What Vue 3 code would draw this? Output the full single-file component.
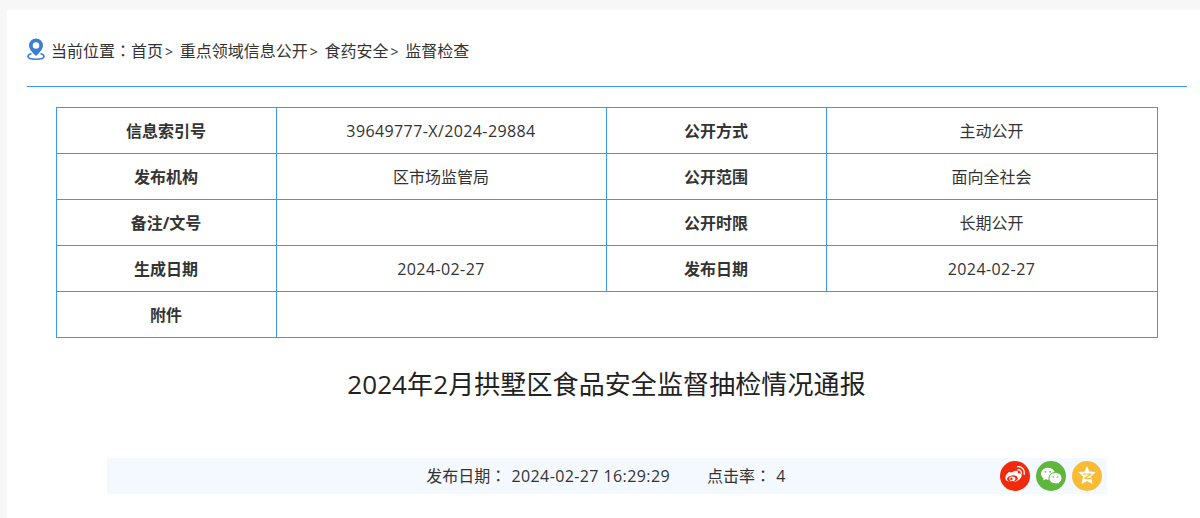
<script setup>
const rows = [
  ['信息索引号', '39649777-X/2024-29884', '公开方式', '主动公开'],
  ['发布机构', '区市场监管局', '公开范围', '面向全社会'],
  ['备注/文号', '', '公开时限', '长期公开'],
  ['生成日期', '2024-02-27', '发布日期', '2024-02-27'],
]
const crumbs = ['首页', '重点领域信息公开', '食药安全']
const isNum = (s) => /^[\dX/-]+$/.test(s)
</script>

<template>
  <div class="page">
    <main class="panel">
      <nav class="crumb">
        <svg class="pin" viewBox="0 0 18 22" width="18" height="22">
          <path fill="#3b7dd8" fill-rule="evenodd" d="M9 0.5a7 7 0 0 1 7 7c0 3.6-3.6 7.6-7 10.5C5.600 15.100 2 11.100 2 7.500a7 7 0 0 1 7-7zM9 4.200a3.300 3.300 0 1 0 0 6.600a3.300 3.300 0 0 0 0-6.600z"/>
          <path fill="none" stroke="#3b7dd8" stroke-width="1.600" d="M4.500 15.600C2.300 16.300 1 17.300 1 18.500c0 1.600 3.500 2.700 8 2.700s8-1.100 8-2.700c0-1.200-1.300-2.200-3.500-2.900"/>
        </svg>
        <span class="crumb-text">当前位置<span class="colon">：</span><template v-for="c in crumbs" :key="c"><a>{{ c }}</a><span class="sep">&gt;</span></template><a>监督检查</a></span>
      </nav>

      <table class="meta">
        <colgroup>
          <col class="c1" /><col class="c2" /><col class="c3" /><col class="c4" />
        </colgroup>
        <tbody>
          <tr v-for="r in rows" :key="r[0]">
            <th>{{ r[0] }}</th>
            <td :class="{ num: isNum(r[1]) }">{{ r[1] }}</td>
            <th>{{ r[2] }}</th>
            <td :class="{ num: isNum(r[3]) }">{{ r[3] }}</td>
          </tr>
          <tr>
            <th>附件</th>
            <td colspan="3"></td>
          </tr>
        </tbody>
      </table>

      <h1 class="title">2024年2月拱墅区食品安全监督抽检情况通报</h1>

      <div class="info">
        <span>发布日期<span class="colon">：</span> <span class="spaced">2024-02-27 16:29:29</span></span>
        <span class="hits">点击率<span class="colon">：</span> <span class="spaced">4</span></span>
        <div class="share">
          <svg viewBox="0 0 30 30" width="30" height="30">
            <circle cx="15" cy="15" r="15" fill="#f02a0c"/>
            <path fill="#fff" fill-rule="evenodd" d="M12.500 11.200c2.300-1.500 4.700-1.800 5.300-.7.300.6.100 1.300-.2 2 1.800-.4 4 .1 4 2.100 0 3.300-4.700 6.500-9.300 6.500-3.700 0-7-1.500-7-4.400 0-1.700 1.300-3.700 3.200-5.500zM12 14.400c-3 .3-5.200 2-5 3.900.2 1.800 2.800 3 5.800 2.700 3-.3 5.200-2 5-3.900-.2-1.900-2.800-3-5.800-2.700z"/>
            <ellipse cx="12.300" cy="17.700" rx="3.100" ry="2.300" fill="#fff"/>
            <circle cx="11.400" cy="18" r="1.200" fill="#f02a0c"/>
            <path fill="none" stroke="#fff" stroke-width="1.300" stroke-linecap="round" d="M17.800 8.800c2.300-.3 4.200 1.800 3.500 4M17.500 5.700c4.300-.6 7.800 3.300 6.700 7.700"/>
          </svg>
          <svg viewBox="0 0 30 30" width="30" height="30">
            <circle cx="15" cy="15" r="15" fill="#5fb63c"/>
            <path fill="#fff" d="M12 6.800c-3.900 0-7 2.700-7 6 0 1.900 1 3.500 2.600 4.600l-.6 2 2.300-1.200c.9.300 1.800.5 2.700.5 3.900 0 7-2.700 7-5.900s-3.100-6-7-6z"/>
            <path fill="#fff" stroke="#5fb63c" stroke-width="1" d="M26 17.200c0-3.100-2.800-5.700-6.500-5.700S13 14.100 13 17.200s2.800 5.600 6.500 5.600c.8 0 1.500-.1 2.200-.4l2 1.100-.5-1.800c1.700-1 2.800-2.600 2.800-4.500z"/>
            <circle cx="9.500" cy="10.800" r=".9" fill="#5fb63c"/>
            <circle cx="14" cy="10.800" r=".9" fill="#5fb63c"/>
            <circle cx="17.200" cy="16" r=".8" fill="#5fb63c"/>
            <circle cx="21.700" cy="16" r=".8" fill="#5fb63c"/>
          </svg>
          <svg viewBox="0 0 30 30" width="30" height="30">
            <circle cx="15" cy="15" r="15" fill="#f7bc33"/>
            <path fill="#fff" d="M15 5l2.400 5.500 6.300.6-4.700 4.400 1.500 7.500-5.500-3-5.500 3 1.500-7.500-4.700-4.400 6.300-.6z"/>
            <path fill="none" stroke="#f7bc33" stroke-width="1.100" stroke-linejoin="round" d="M10.800 13h8.400l-6.500 4.300c2.100.5 4.200.4 6.500-.2"/>
          </svg>
        </div>
      </div>
    </main>
  </div>
</template>

<style>
html, body { margin: 0; background: #f7f7f7; }
</style>

<style scoped>
.page {
  padding: 10px 0 0 7px;
  height: 508px;
  overflow: hidden;
  font-family: "Open Sans", "Noto Sans CJK SC", sans-serif;
  color: #333;
}
.panel {
  background: #fff;
  height: 508px;
  padding: 0 13px 0 20px;
}
.crumb {
  display: flex;
  align-items: flex-start;
  height: 76px;
  border-bottom: 1px solid #3b99f0;
  font-size: 16px;
}
.pin { margin-top: 28px; }
.crumb-text {
  margin: 29px 0 0 6px;
  line-height: 22px;
}
.colon { font-family: "Noto Sans CJK TC", sans-serif; }
.sep { margin: 0 6.700px 0 2px; font-size: 14px; }
.meta {
  width: 1101px;
  margin: 20px 0 0 29px;
  border-collapse: collapse;
  table-layout: fixed;
  font-size: 16px;
}
.c1 { width: 220px; }
.c2 { width: 330px; }
.c3 { width: 220px; }
.c4 { width: 331px; }
.meta th, .meta td {
  height: 43px;
  padding: 0 1px 2px 0;
  border: 1px solid #3b99f0;
  text-align: center;
}
.meta td.num {
  height: 45px;
  padding-bottom: 0;
  letter-spacing: 0.4px;
}
.meta th { font-weight: 700; color: #333; }
.title {
  width: 1101px;
  margin: 26px 0 0 29px;
  font-size: 26px;
  font-weight: 400;
  line-height: 40px;
  letter-spacing: 0.1px;
  text-align: center;
  color: #222;
}
.info {
  display: flex;
  align-items: center;
  justify-content: center;
  position: relative;
  box-sizing: border-box;
  width: 1000px;
  height: 36px;
  margin: 54px 0 0 80px;
  padding: 0 2px 2px 0;
  background: #f3f9fe;
  font-size: 16px;
}
.spaced { margin-left: 1px; letter-spacing: 0.4px; }
.hits { margin-left: 37px; }
.share {
  position: absolute;
  right: 5px;
  top: 3px;
  display: flex;
  gap: 6px;
}
.share svg { display: block; }
</style>
